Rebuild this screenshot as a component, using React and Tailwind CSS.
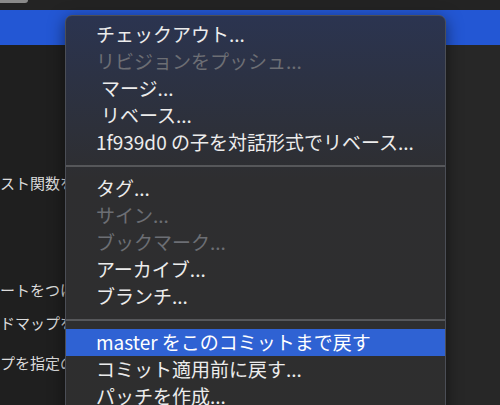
const items = [
  { label: 'チェックアウト...' },
  { label: 'リビジョンをプッシュ...', disabled: true },
  { label: 'マージ...', indent: true },
  { label: 'リベース...', indent: true },
  { label: '1f939d0 の子を対話形式でリベース...' },
  { sep: true },
  { label: 'タグ...' },
  { label: 'サイン...', disabled: true },
  { label: 'ブックマーク...', disabled: true },
  { label: 'アーカイブ...' },
  { label: 'ブランチ...' },
  { sep: true },
  { label: 'master をこのコミットまで戻す', active: true },
  { label: 'コミット適用前に戻す...' },
  { label: 'パッチを作成...' },
];

function MenuItem({ item }) {
  if (item.sep) {
    return (
      <div className="h-[19px] flex items-center">
        <div className="w-full h-[2px] bg-[#56575a]" />
      </div>
    );
  }
  return (
    <div
      className={
        'h-[27px] flex items-center whitespace-nowrap ' +
        (item.indent ? 'pl-[35px] ' : 'pl-[30px] ') +
        (item.active ? 'bg-[#2f62d3] text-white ' : '') +
        (item.disabled ? 'text-[#6c6e74]' : item.active ? '' : 'text-[#ececec]')
      }
    >
      {item.label}
    </div>
  );
}

export default function App() {
  return (
    <div
      className="relative w-[500px] h-[405px] overflow-hidden bg-[#1f1f1f] text-[#dcdcdc]"
      style={{ fontFamily: '"Noto Sans CJK JP", "Noto Sans", sans-serif' }}
    >
      <div className="h-[10px] bg-[#232323]">
        <div className="w-[28px] h-[3px] bg-[#8a8a8a] rounded-br-[3px]" />
      </div>
      <div className="h-[35px] bg-[#2357d4]" />
      <div className="flex h-[360px]">
        <div className="w-[66px] overflow-hidden flex flex-col text-[15px] leading-[24px] whitespace-nowrap">
          <div className="mt-[126px]">スト関数を使う</div>
          <div className="mt-[83px]">ートをつける</div>
          <div className="mt-[9px]">ドマップを作る</div>
          <div className="mt-[16px]">プを指定の</div>
        </div>
        <div className="flex-1" />
        <div className="w-[54px] bg-[#272727]" />
      </div>

      <div className="absolute left-[65px] top-[15px] w-[381px] h-[410px] rounded-[7px] border border-[#4b4e56] bg-gradient-to-b from-[#2b3450] via-[#2e2e30] via-40% to-[#2e2e2e] shadow-[0_4px_16px_rgba(0,0,0,0.5)] text-[19px] pt-[5px]">
        {items.map((item, i) => (
          <MenuItem key={i} item={item} />
        ))}
      </div>
    </div>
  );
}
